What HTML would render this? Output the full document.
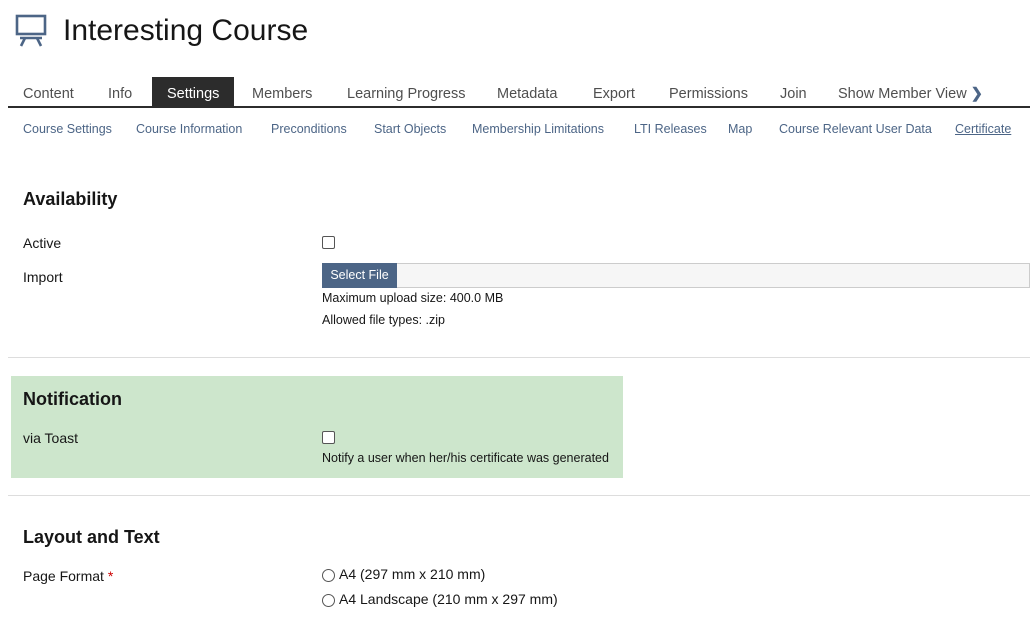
<!DOCTYPE html>
<html><head><meta charset="utf-8"><style>
*{margin:0;padding:0;box-sizing:border-box}
body{width:1030px;height:617px;overflow:hidden;background:#fff;font-family:"Liberation Sans",sans-serif;color:#161616;position:relative}
.a{position:absolute;white-space:nowrap;line-height:1}
.t{font-size:14.5px;color:#4f4f4f;top:87px}
.s{font-size:12.5px;color:#4c6586;top:123px}
.h{font-size:18px;font-weight:bold;color:#161616}
.l{font-size:14px;color:#161616}
.cb{position:absolute;width:13px;height:13px;border:1px solid #555;border-radius:2px;background:#fff}
.rd{position:absolute;width:13px;height:13px;border:1px solid #555;border-radius:50%;background:#fff}
.sm{font-size:12.5px;color:#161616}
.hr{position:absolute;left:8px;right:0;height:1px;background:#ddd}
</style></head><body>
<svg class="a" style="left:15px;top:14px" width="32" height="33" viewBox="0 0 32 33" fill="none" stroke="#4c6586" stroke-width="2.6">
<rect x="2" y="2" width="28" height="18"/><line x1="5" y1="24" x2="27" y2="24"/><line x1="10" y1="24" x2="6" y2="32"/><line x1="22" y1="24" x2="26" y2="32"/></svg>
<div class="a" style="left:63px;top:16px;font-size:30px;color:#161616">Interesting Course</div>
<div class="a" style="left:152px;top:77px;width:82px;height:30px;background:#2c2c2c"></div>
<div class="a t" style="left:23px">Content</div>
<div class="a t" style="left:108px">Info</div>
<div class="a t" style="left:167px;color:#fff">Settings</div>
<div class="a t" style="left:252px">Members</div>
<div class="a t" style="left:347px">Learning Progress</div>
<div class="a t" style="left:497px">Metadata</div>
<div class="a t" style="left:593px">Export</div>
<div class="a t" style="left:669px">Permissions</div>
<div class="a t" style="left:780px">Join</div>
<div class="a t" style="left:838px">Show Member View <b style="color:#4c6586">&#x276F;</b></div>
<div class="a" style="left:8px;top:106px;width:1022px;height:2px;background:#2c2c2c"></div>
<div class="a s" style="left:23px">Course Settings</div>
<div class="a s" style="left:136px">Course Information</div>
<div class="a s" style="left:271px">Preconditions</div>
<div class="a s" style="left:374px">Start Objects</div>
<div class="a s" style="left:472px">Membership Limitations</div>
<div class="a s" style="left:634px">LTI Releases</div>
<div class="a s" style="left:728px">Map</div>
<div class="a s" style="left:779px">Course Relevant User Data</div>
<div class="a s" style="left:955px;text-decoration:underline">Certificate</div>

<div class="a h" style="left:23px;top:190px">Availability</div>
<div class="a l" style="left:23px;top:236px">Active</div>
<div class="cb" style="left:322px;top:236px"></div>
<div class="a l" style="left:23px;top:270px">Import</div>
<div class="a" style="left:322px;top:263px;width:708px;height:25px;border:1px solid #ccc;background:#f6f6f6"></div>
<div class="a" style="left:322px;top:263px;width:75px;height:25px;background:#4c6586;color:#fff;font-size:12.5px;line-height:25px;text-align:center">Select File</div>
<div class="a sm" style="left:322px;top:292px">Maximum upload size: 400.0 MB</div>
<div class="a sm" style="left:322px;top:314px">Allowed file types: .zip</div>
<div class="hr" style="top:357px"></div>

<div class="a" style="left:11px;top:376px;width:612px;height:102px;background:#cde6cc"></div>
<div class="a h" style="left:23px;top:390px">Notification</div>
<div class="a l" style="left:23px;top:431px">via Toast</div>
<div class="cb" style="left:322px;top:431px"></div>
<div class="a sm" style="left:322px;top:452px">Notify a user when her/his certificate was generated</div>
<div class="hr" style="top:495px"></div>

<div class="a h" style="left:23px;top:528px">Layout and Text</div>
<div class="a l" style="left:23px;top:569px">Page Format <span style="color:#c00">*</span></div>
<div class="rd" style="left:322px;top:569px"></div>
<div class="a l" style="left:339px;top:567px">A4 (297 mm x 210 mm)</div>
<div class="rd" style="left:322px;top:594px"></div>
<div class="a l" style="left:339px;top:592px">A4 Landscape (210 mm x 297 mm)</div>
</body></html>
